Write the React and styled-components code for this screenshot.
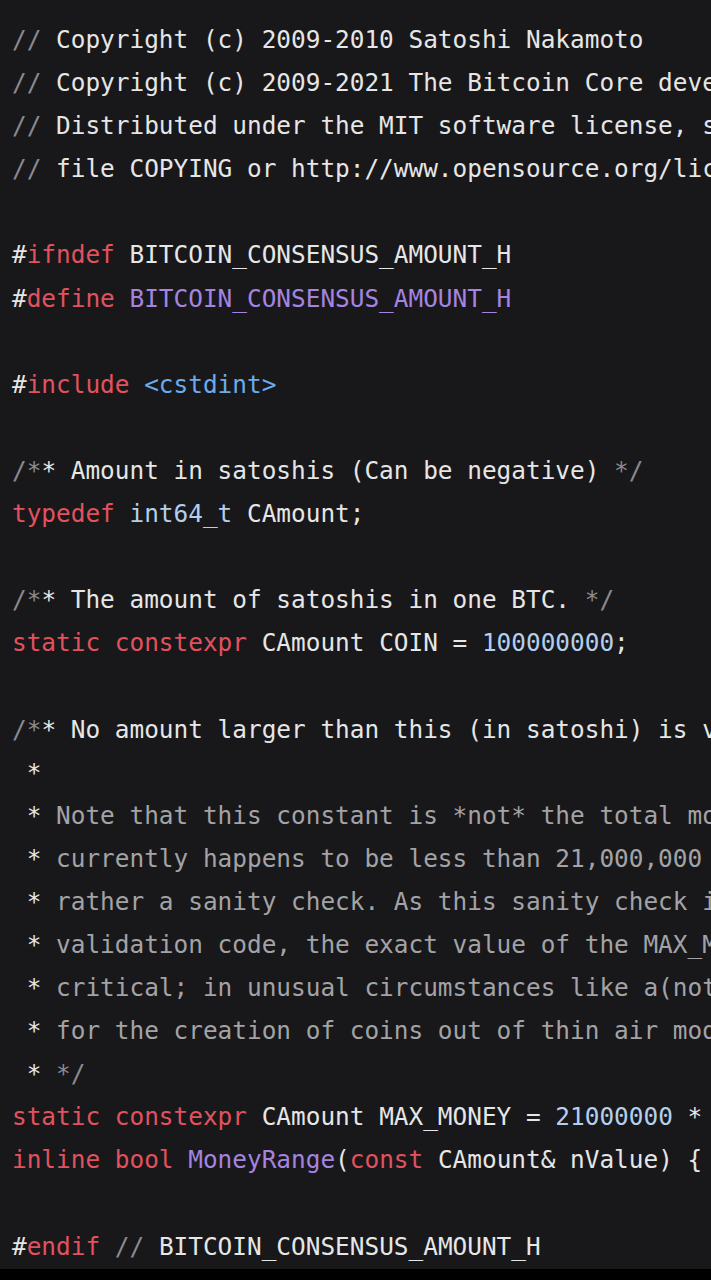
import styled, { createGlobalStyle } from "styled-components";

const GlobalStyle = createGlobalStyle`
  html, body {
    margin: 0;
    padding: 0;
    background: #000;
  }
`;

const colors = {
  plain: "#e6e6e6",
  comment: "#8a8a8e",
  doc: "#a3a3a6",
  keyword: "#e2525e",
  entity: "#a584e0",
  include: "#6aaceb",
  constant: "#b3cfec",
};

// each line is a list of [kind, text] tokens
const lines = [
  [["comment", "// "], ["plain", "Copyright (c) 2009-2010 Satoshi Nakamoto"]],
  [["comment", "// "], ["plain", "Copyright (c) 2009-2021 The Bitcoin Core developers"]],
  [["comment", "// "], ["plain", "Distributed under the MIT software license, see the accompanying"]],
  [["comment", "// "], ["plain", "file COPYING or http://www.opensource.org/licenses/mit-license.php."]],
  [],
  [["plain", "#"], ["keyword", "ifndef"], ["plain", " BITCOIN_CONSENSUS_AMOUNT_H"]],
  [["plain", "#"], ["keyword", "define"], ["plain", " "], ["entity", "BITCOIN_CONSENSUS_AMOUNT_H"]],
  [],
  [["plain", "#"], ["keyword", "include"], ["plain", " "], ["include", "<cstdint>"]],
  [],
  [["comment", "/*"], ["plain", "* Amount in satoshis (Can be negative) "], ["comment", "*/"]],
  [["keyword", "typedef"], ["plain", " "], ["constant", "int64_t"], ["plain", " CAmount;"]],
  [],
  [["comment", "/*"], ["plain", "* The amount of satoshis in one BTC. "], ["comment", "*/"]],
  [["keyword", "static"], ["plain", " "], ["keyword", "constexpr"], ["plain", " CAmount COIN = "], ["constant", "100000000"], ["plain", ";"]],
  [],
  [["comment", "/*"], ["plain", "* No amount larger than this (in satoshi) is valid."]],
  [["plain", " *"]],
  [["plain", " *"], ["doc", " Note that this constant is *not* the total money supply, which in Bitcoin"]],
  [["plain", " *"], ["doc", " currently happens to be less than 21,000,000 BTC for various reasons, but"]],
  [["plain", " *"], ["doc", " rather a sanity check. As this sanity check is used by consensus-critical"]],
  [["plain", " *"], ["doc", " validation code, the exact value of the MAX_MONEY constant is consensus"]],
  [["plain", " *"], ["doc", " critical; in unusual circumstances like a(nother) overflow bug that allowed"]],
  [["plain", " *"], ["doc", " for the creation of coins out of thin air modification could lead to a fork."]],
  [["plain", " *"], ["comment", " */"]],
  [["keyword", "static"], ["plain", " "], ["keyword", "constexpr"], ["plain", " CAmount MAX_MONEY = "], ["constant", "21000000"], ["plain", " * COIN;"]],
  [["keyword", "inline"], ["plain", " "], ["keyword", "bool"], ["plain", " "], ["entity", "MoneyRange"], ["plain", "("], ["keyword", "const"], ["plain", " CAmount& nValue) { "], ["keyword", "return"], ["plain", " (nValue >= "], ["constant", "0"], ["plain", " && nValue <= MAX_MONEY); }"]],
  [],
  [["plain", "#"], ["keyword", "endif"], ["comment", " // "], ["plain", "BITCOIN_CONSENSUS_AMOUNT_H"]],
];

export default function App() {
  return (
    <>
      <GlobalStyle />
      <Page>
        <CodeBlock>
          {lines.map((line, i) => (
            <Line key={i}>
              {line.length === 0
                ? " "
                : line.map(([kind, text], j) => (
                    <Token key={j} $kind={kind}>
                      {text}
                    </Token>
                  ))}
            </Line>
          ))}
        </CodeBlock>
      </Page>
    </>
  );
}

/* styled components */

const Page = styled.div`
  width: 711px;
  height: 1280px;
  background: #000;
  overflow: hidden;
`;

const CodeBlock = styled.pre`
  margin: 0;
  padding: 18px 0 1px 12px;
  background: #18181b;
  font-family: "DejaVu Sans Mono", "Liberation Mono", monospace;
  font-size: 24.4px;
  line-height: 43.1px;
  color: ${colors.plain};
  overflow: hidden;
`;

const Line = styled.div`
  white-space: pre;
  height: 43.1px;
`;

const Token = styled.span`
  color: ${(p) => colors[p.$kind]};
`;
